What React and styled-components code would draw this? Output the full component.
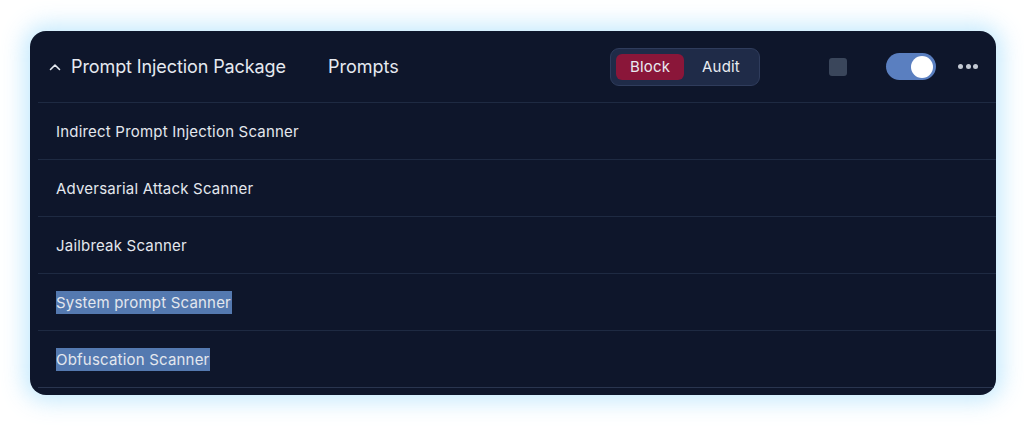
import React, { useState } from 'react';
import styled, { createGlobalStyle } from 'styled-components';

const GlobalStyle = createGlobalStyle`
    html, body {
        margin: 0;
        padding: 0;
        background: #ffffff;
        font-family: Inter, "Liberation Sans", sans-serif;
    }
`;

const Page = styled.div`
    width: 1024px;
    height: 426px;
    padding: 31px 28px 0 30px;
    box-sizing: border-box;
`;

const Card = styled.div`
    width: 966px;
    height: 364px;
    box-sizing: border-box;
    background: #0e162b;
    border-radius: 16px;
    padding: 0 0 7px 8px;
    box-shadow: 0 0 22px 6px rgba(125, 206, 250, 0.45);
    display: flex;
    flex-direction: column;
    overflow: hidden;
`;

const Header = styled.div`
    height: 72px;
    flex-shrink: 0;
    box-sizing: border-box;
    display: flex;
    align-items: center;
    padding: 0 18px 0 10px;
    border-bottom: 1px solid #1e2a42;
    color: #e5e9f0;
`;

const Chevron = styled.svg`
    width: 14px;
    height: 14px;
    margin-right: 9px;
    flex-shrink: 0;
`;

const Title = styled.div`
    width: 257px;
    font-size: 18px;
    letter-spacing: -0.1px;
`;

const Category = styled.div`
    width: 282px;
    font-size: 18px;
`;

const Segment = styled.div`
    display: flex;
    align-items: center;
    gap: 4px;
    width: 150px;
    height: 38px;
    box-sizing: border-box;
    padding: 5px;
    border-radius: 9px;
    background: #1f2b48;
    border: 1px solid #2f3c5c;
`;

const SegButton = styled.div`
    height: 26px;
    width: ${(p) => p.width}px;
    display: flex;
    align-items: center;
    justify-content: center;
    border-radius: 6px;
    font-size: 15px;
    letter-spacing: 0.2px;
    color: #e8ebf1;
    background: ${(p) => (p.active ? '#8a1639' : 'transparent')};
`;

const Check = styled.div`
    width: 18px;
    height: 18px;
    border-radius: 3px;
    background: #3a465b;
    margin-left: 69px;
`;

const Switch = styled.div`
    width: 50px;
    height: 27px;
    border-radius: 14px;
    background: #5a7fc0;
    margin-left: 39px;
    display: flex;
    align-items: center;
    justify-content: ${(p) => (p.on ? 'flex-end' : 'flex-start')};
    padding: 0 3px;
    box-sizing: border-box;
    cursor: pointer;
`;

const Knob = styled.div`
    width: 22px;
    height: 22px;
    border-radius: 50%;
    background: #ffffff;
`;

const Dots = styled.div`
    margin-left: 22px;
    display: flex;
    gap: 2.5px;
    width: 20px;
`;

const Dot = styled.span`
    width: 5px;
    height: 5px;
    border-radius: 50%;
    background: #c3c9d3;
`;

const Row = styled.div`
    height: 57px;
    flex-shrink: 0;
    box-sizing: border-box;
    display: flex;
    align-items: center;
    padding-left: 18px;
    border-bottom: 1px solid ${(p) => (p.last ? '#29354f' : '#1e2a42')};
    font-size: 15px;
    letter-spacing: 0.2px;
    color: #e3e7ee;
`;

const Marked = styled.span`
    background: ${(p) => (p.selected ? '#5479b0' : 'transparent')};
    padding: 2px 1px 2px 0;
`;

const scanners = [
    { name: 'Indirect Prompt Injection Scanner' },
    { name: 'Adversarial Attack Scanner' },
    { name: 'Jailbreak Scanner' },
    { name: 'System prompt Scanner', selected: true },
    { name: 'Obfuscation Scanner', selected: true },
];

const App = () => {
    const [mode, setMode] = useState('block');
    const [enabled, setEnabled] = useState(true);

    return (
        <Page>
            <GlobalStyle />
            <Card>
                <Header>
                    <Chevron viewBox="0 0 14 14" fill="none">
                        <path
                            d="M2.5 9.5 L7 5 L11.5 9.5"
                            stroke="#e5e9f0"
                            strokeWidth="1.6"
                            strokeLinecap="round"
                            strokeLinejoin="round"
                        />
                    </Chevron>
                    <Title>Prompt Injection Package</Title>
                    <Category>Prompts</Category>
                    <Segment>
                        <SegButton
                            width={68}
                            active={mode === 'block'}
                            onClick={() => setMode('block')}
                        >
                            Block
                        </SegButton>
                        <SegButton
                            width={66}
                            active={mode === 'audit'}
                            onClick={() => setMode('audit')}
                        >
                            Audit
                        </SegButton>
                    </Segment>
                    <Check />
                    <Switch on={enabled} onClick={() => setEnabled(!enabled)}>
                        <Knob />
                    </Switch>
                    <Dots>
                        <Dot />
                        <Dot />
                        <Dot />
                    </Dots>
                </Header>
                {scanners.map((s, i) => (
                    <Row key={s.name} last={i === scanners.length - 1}>
                        <Marked selected={s.selected}>{s.name}</Marked>
                    </Row>
                ))}
            </Card>
        </Page>
    );
};

export default App;
